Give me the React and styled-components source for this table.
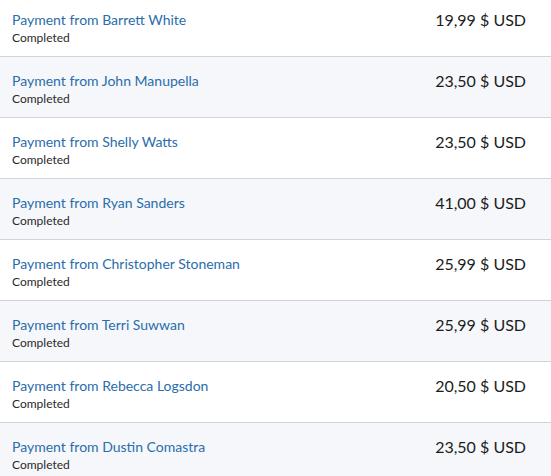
import React from 'react';
import styled, { createGlobalStyle } from 'styled-components';

const GlobalStyle = createGlobalStyle`
  body {
    margin: 0;
    background: #ffffff;
    font-family: Lato, "Open Sans", sans-serif;
  }
`;

// the list is scrolled a few pixels, so the first row starts above the top edge
const List = styled.ul`
  list-style: none;
  margin: -4px 0 0;
  padding: 0;
  width: 551px;
`;

const Row = styled.li`
  display: flex;
  justify-content: space-between;
  align-items: flex-start;
  height: 60px;
  box-sizing: content-box;
  padding: 0 25px 0 12px;
  border-bottom: 1px solid #cfd4da;
  background: ${(p) => (p.$shaded ? '#f5f7fa' : '#ffffff')};
`;

const Info = styled.div`
  display: flex;
  flex-direction: column;
  padding-top: 15px;
`;

const Title = styled.a`
  color: #2a6dab;
  font-size: 14px;
  line-height: 18px;
  text-decoration: none;
`;

const Status = styled.span`
  margin-top: 1px;
  color: #2a2a2a;
  font-size: 12px;
  line-height: 16px;
`;

const Amount = styled.span`
  padding-top: 14px;
  color: #1c1c1c;
  font-size: 16px;
  line-height: 20px;
`;

const payments = [
  { name: 'Barrett White', amount: '19,99' },
  { name: 'John Manupella', amount: '23,50' },
  { name: 'Shelly Watts', amount: '23,50' },
  { name: 'Ryan Sanders', amount: '41,00' },
  { name: 'Christopher Stoneman', amount: '25,99' },
  { name: 'Terri Suwwan', amount: '25,99' },
  { name: 'Rebecca Logsdon', amount: '20,50' },
  { name: 'Dustin Comastra', amount: '23,50' },
];

export default function App() {
  return (
    <>
      <GlobalStyle />
      <List>
        {payments.map((p, i) => (
          <Row key={p.name} $shaded={i % 2 === 1}>
            <Info>
              <Title href="#">Payment from {p.name}</Title>
              <Status>Completed</Status>
            </Info>
            <Amount>{p.amount} $ USD</Amount>
          </Row>
        ))}
      </List>
    </>
  );
}
